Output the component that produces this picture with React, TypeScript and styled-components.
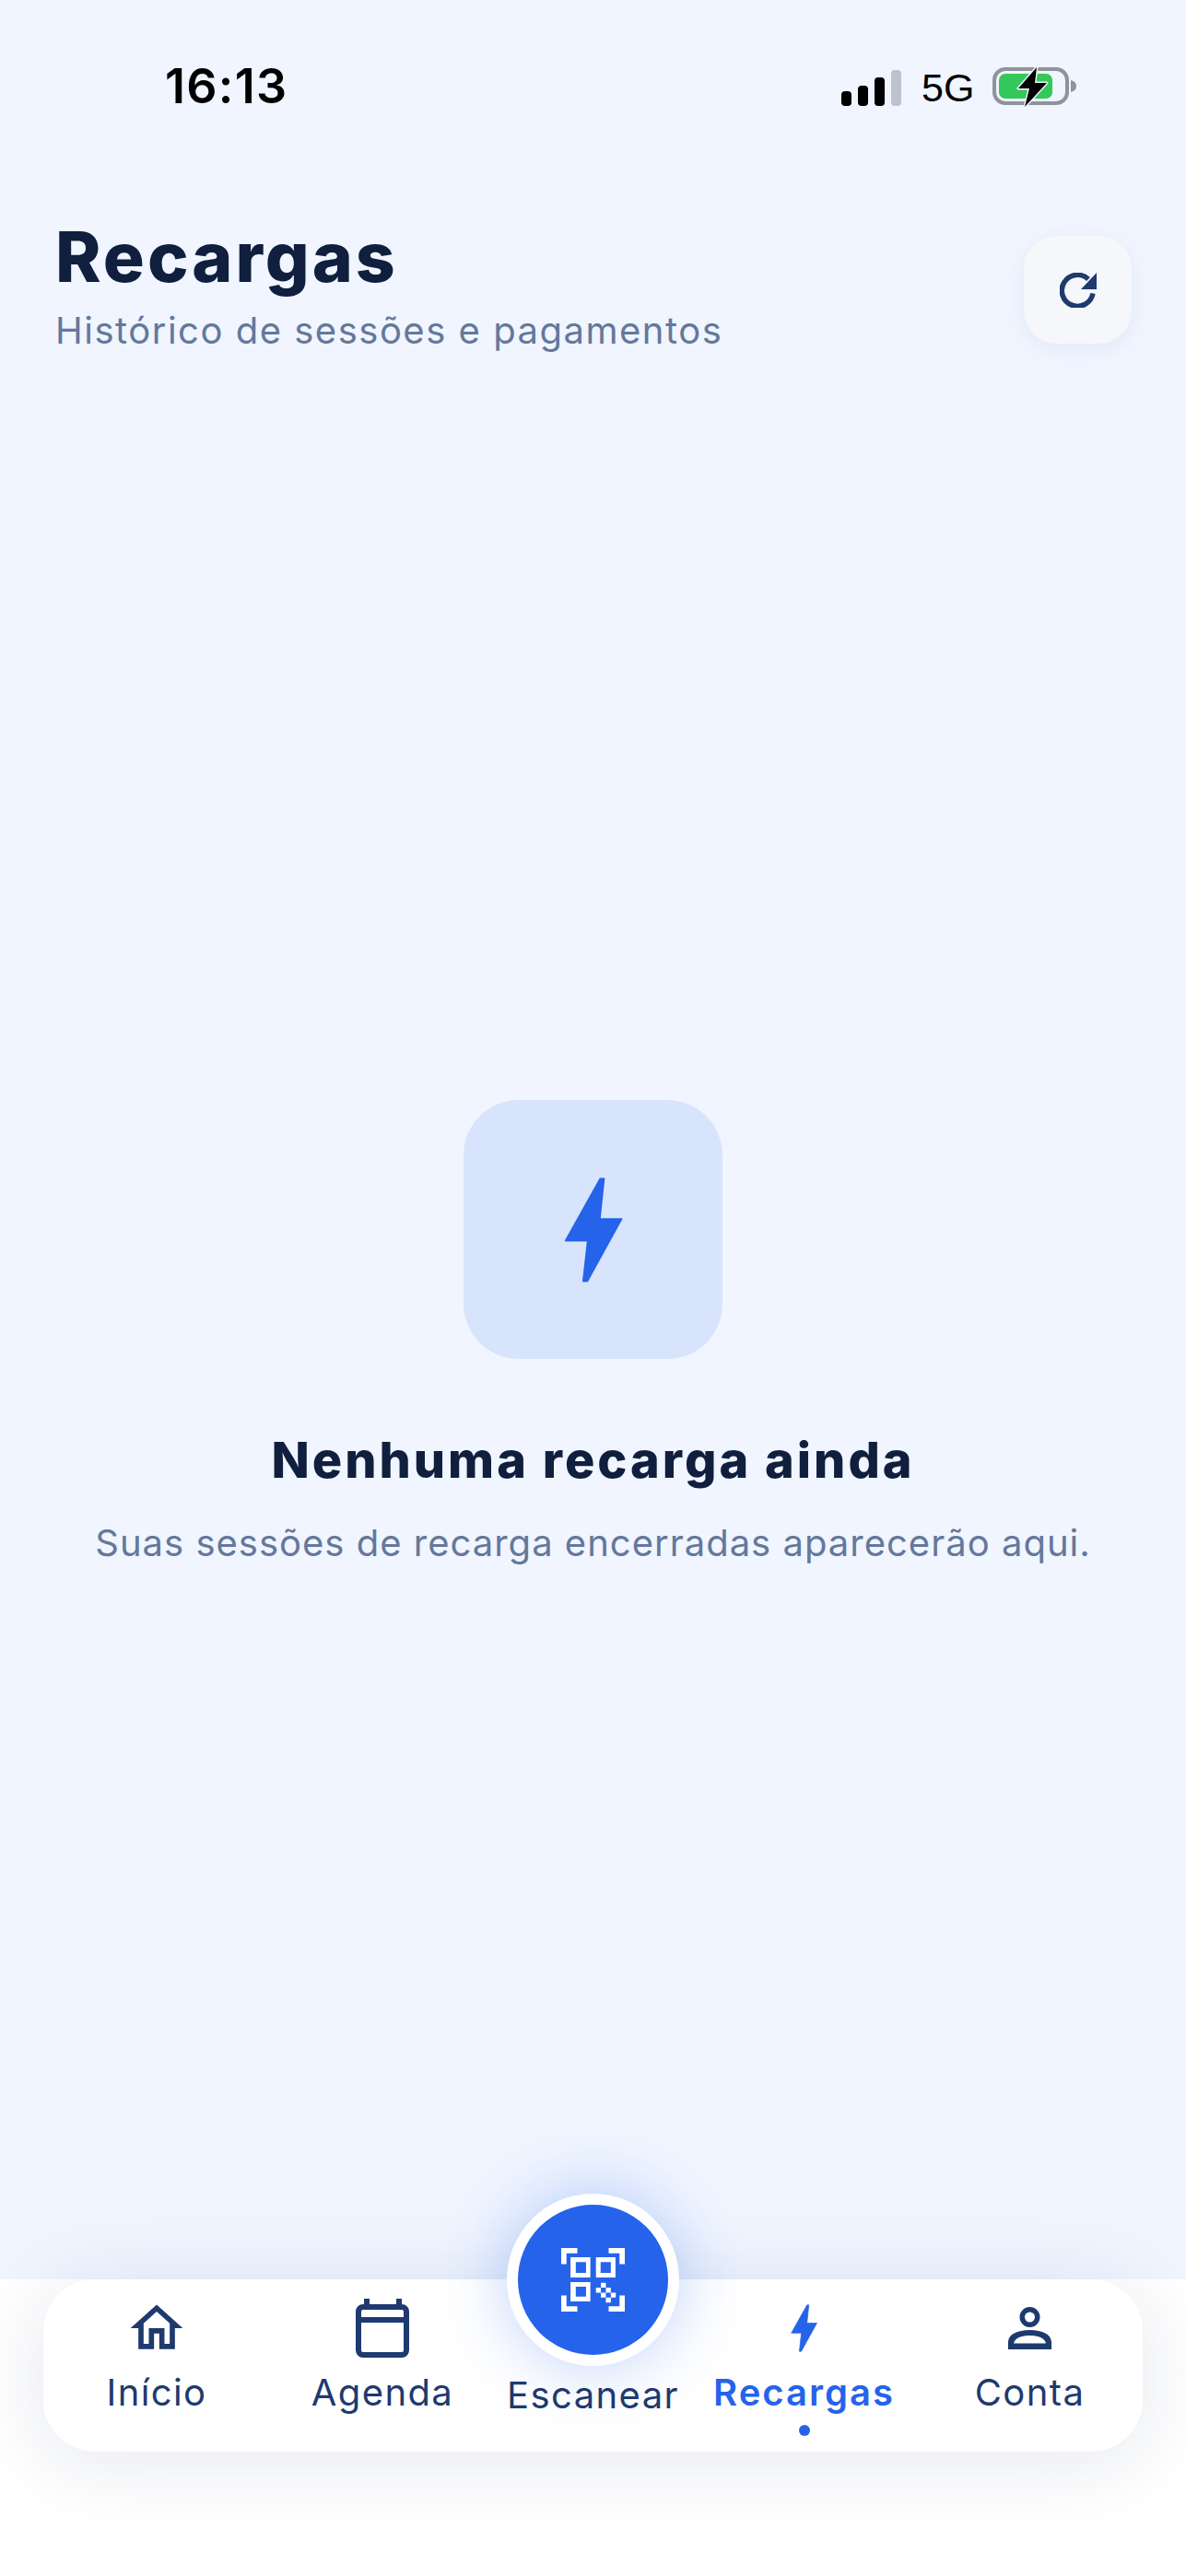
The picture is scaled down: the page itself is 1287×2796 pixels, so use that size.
import React from "react";
import styled, { createGlobalStyle } from "styled-components";

const GlobalStyle = createGlobalStyle`
  html, body {
    margin: 0;
    padding: 0;
    background: #f0f5ff;
  }
  * {
    box-sizing: border-box;
  }
`;

const Screen = styled.div`
  width: 1287px;
  height: 2796px;
  display: flex;
  flex-direction: column;
  overflow: hidden;
  background: #f0f5ff;
  font-family: Inter, "Liberation Sans", sans-serif;
`;

const StatusBar = styled.div`
  height: 130px;
  padding: 63px 0 0 179px;
  display: flex;
  justify-content: space-between;
  align-items: flex-start;
`;

const Clock = styled.div`
  font-size: 52px;
  line-height: 62px;
  font-weight: 600;
  color: #000;
  letter-spacing: 1.3px;
`;

const StatusIcons = styled.div`
  display: flex;
  align-items: center;
  gap: 22px;
  margin-top: 10px;
  padding-right: 118px;
`;

const Signal = styled.div`
  display: flex;
  align-items: flex-end;
  gap: 7px;
  height: 40px;
`;

const SignalBar = styled.span<{ $h: number; $off?: boolean }>`
  width: 11px;
  height: ${(p) => p.$h}px;
  border-radius: 4px;
  background: ${(p) => (p.$off ? "#bcc2ce" : "#000")};
`;

const NetworkLabel = styled.span`
  font-family: "Liberation Sans", Arial, sans-serif;
  font-size: 43px;
  line-height: 44px;
  color: #000;
  width: 55px;
  white-space: nowrap;
`;

const Header = styled.header`
  display: flex;
  justify-content: space-between;
  align-items: flex-start;
  padding: 0 59px 0 60px;
  margin-top: 126px;
`;

const TitleBlock = styled.div`
  display: flex;
  flex-direction: column;
`;

const PageTitle = styled.h1`
  margin: -21px 0 0;
  font-size: 75px;
  line-height: 88px;
  font-weight: 800;
  color: #0f1f3d;
  letter-spacing: 3px;
`;

const PageSubtitle = styled.p`
  margin: 12px 0 0;
  font-size: 40px;
  line-height: 48px;
  color: #64789b;
  letter-spacing: 1.5px;
`;

const RefreshButton = styled.button`
  width: 117px;
  height: 117px;
  border: none;
  border-radius: 36px;
  background: #f5f7fb;
  box-shadow: 0 6px 24px rgba(30, 58, 110, 0.06);
  display: flex;
  align-items: center;
  justify-content: center;
  padding: 0;
`;

const Main = styled.main`
  flex: 1;
  display: flex;
  flex-direction: column;
  align-items: center;
  padding-top: 811px;
`;

const EmptyBadge = styled.div`
  width: 281px;
  height: 281px;
  border-radius: 60px;
  background: #d8e4fc;
  display: flex;
  align-items: center;
  justify-content: center;
`;

const EmptyTitle = styled.h2`
  margin: 77px 0 0;
  font-size: 54px;
  line-height: 66px;
  font-weight: 800;
  color: #0f1f3d;
  letter-spacing: 3px;
`;

const EmptyText = styled.p`
  margin: 33px 0 0;
  font-size: 40px;
  line-height: 48px;
  color: #64789b;
  letter-spacing: 1px;
`;

const TabArea = styled.div`
  height: 322px;
  background: #fff;
  padding: 0 47px;
  position: relative;
`;

const TabBar = styled.nav`
  height: 187px;
  border-radius: 56px;
  background: #fff;
  box-shadow: 0 10px 90px rgba(20, 40, 90, 0.11);
  display: grid;
  grid-template-columns: 246px 244px 213px 245px 245px;
`;

const TabItem = styled.div`
  display: flex;
  flex-direction: column;
  align-items: center;
  position: relative;
`;

const IconSlot = styled.div`
  height: 64px;
  margin-top: 21px;
  display: flex;
  align-items: center;
  justify-content: center;
`;

const TabLabel = styled.span<{ $active?: boolean }>`
  margin-top: 14px;
  font-size: 40px;
  line-height: 48px;
  font-weight: ${(p) => (p.$active ? 600 : 400)};
  color: ${(p) => (p.$active ? "#2563eb" : "#1e3a6e")};
  letter-spacing: ${(p) => (p.$active ? "2px" : "1.4px")};
  white-space: nowrap;
`;

const ActiveDot = styled.span`
  width: 12px;
  height: 12px;
  margin-top: 11px;
  border-radius: 50%;
  background: #2563eb;
`;

const ScanButton = styled.div`
  width: 187px;
  height: 187px;
  margin-top: -93px;
  border-radius: 50%;
  border: 12px solid #fff;
  background: #2563eb;
  box-shadow: 0 0 70px rgba(37, 99, 235, 0.3);
  display: flex;
  align-items: center;
  justify-content: center;
  flex-shrink: 0;
`;

const ScanLabel = styled(TabLabel)`
  margin-top: 8px;
`;

const Bolt = ({ w, h }: { w: number; h: number }) => (
  <svg width={w} height={h} viewBox="393 323 194 347">
    <path
      fill="#2563eb"
      stroke="#2563eb"
      strokeWidth="5"
      strokeLinejoin="round"
      d="M512 328H525L511 460H583L470 665H456L471 532H398Z"
    />
  </svg>
);

const HomeIcon = () => (
  <svg width="68" height="68" viewBox="0 0 24 24" fill="#1e3a6e">
    <path d="M12 5.69l5 4.5V18h-2v-6H9v6H7v-7.81l5-4.5M12 3L2 12h3v8h6v-6h2v6h6v-8h3L12 3z" />
  </svg>
);

const CalendarIcon = () => (
  <svg width="58" height="64" viewBox="0 0 58 64" fill="none">
    <rect x="3" y="9" width="52" height="52" rx="5" stroke="#1e3a6e" strokeWidth="6" />
    <path d="M3 23H55" stroke="#1e3a6e" strokeWidth="6" />
    <path d="M12 0V8M47 0V8" stroke="#1e3a6e" strokeWidth="6" />
  </svg>
);

const PersonIcon = () => (
  <svg width="47" height="47" viewBox="0 0 47 47" fill="#1e3a6e">
    <path
      fillRule="evenodd"
      d="M23.5 0A11 11 0 1 1 23.5 22A11 11 0 1 1 23.5 0ZM23.5 5.500A5.500 5.500 0 1 0 23.5 16.500A5.500 5.500 0 1 0 23.5 5.500Z"
    />
    <path
      fillRule="evenodd"
      d="M0 46V38C0 30 10 25 23.500 25S47 30 47 38V46ZM6 39.500H41C40 34 33 31 23.500 31S7 34 6 39.500Z"
    />
  </svg>
);

const RefreshIcon = () => (
  <svg width="40" height="38" viewBox="0 0 40 38" fill="none">
    <path d="M31 7A17 17 0 1 0 36 22.500" stroke="#1e3a6e" strokeWidth="5.500" />
    <path d="M40 0V18H23Z" fill="#1e3a6e" />
  </svg>
);

const ScanIcon = () => (
  <svg width="69" height="69" viewBox="0 0 205 205" fill="#fff">
    <path d="M0 52V0H52V17H17V52Z" />
    <path d="M205 52V0H153V17H188V52Z" />
    <path d="M0 153V205H52V188H17V153Z" />
    <path d="M205 153V205H153V188H188V153Z" />
    <path fillRule="evenodd" d="M30 30H94V95H30ZM47 45V80H80V45Z" />
    <path fillRule="evenodd" d="M112 30H175V95H112ZM127 45V80H160V45Z" />
    <path fillRule="evenodd" d="M30 110H94V172H30ZM47 125V157H80V125Z" />
    <path d="M128 112h16v16h-16zM112 128h16v16h-16zM144 128h16v16h-16zM128 144h16v16h-16zM160 144h16v16h-16zM144 160h16v16h-16z" />
  </svg>
);

const Battery = () => (
  <svg width="92" height="44" viewBox="0 0 92 44" fill="none">
    <rect x="2" y="2" width="79" height="37" rx="12" stroke="#8f939b" strokeWidth="4" />
    <rect x="7" y="7" width="58" height="27" rx="7" fill="#34c759" />
    <path d="M85 14C89 15 91 17 91 20.500S89 26 85 27Z" fill="#8f939b" />
    <path
      d="M48 0L28 23H40L35 43L59 17H46Z"
      fill="#000"
      stroke="#f0f5ff"
      strokeWidth="3"
      strokeLinejoin="round"
      paintOrder="stroke"
    />
  </svg>
);

function App() {
  return (
    <>
      <GlobalStyle />
      <Screen>
        <StatusBar>
          <Clock>16:13</Clock>
          <StatusIcons>
            <Signal>
              <SignalBar $h={16} />
              <SignalBar $h={22} />
              <SignalBar $h={31} />
              <SignalBar $h={39} $off />
            </Signal>
            <NetworkLabel>5G</NetworkLabel>
            <Battery />
          </StatusIcons>
        </StatusBar>
        <Header>
          <TitleBlock>
            <PageTitle>Recargas</PageTitle>
            <PageSubtitle>Histórico de sessões e pagamentos</PageSubtitle>
          </TitleBlock>
          <RefreshButton aria-label="Atualizar">
            <RefreshIcon />
          </RefreshButton>
        </Header>
        <Main>
          <EmptyBadge>
            <Bolt w={64} h={116} />
          </EmptyBadge>
          <EmptyTitle>Nenhuma recarga ainda</EmptyTitle>
          <EmptyText>Suas sessões de recarga encerradas aparecerão aqui.</EmptyText>
        </Main>
        <TabArea>
          <TabBar>
            <TabItem>
              <IconSlot>
                <HomeIcon />
              </IconSlot>
              <TabLabel>Início</TabLabel>
            </TabItem>
            <TabItem>
              <IconSlot>
                <CalendarIcon />
              </IconSlot>
              <TabLabel>Agenda</TabLabel>
            </TabItem>
            <TabItem>
              <ScanButton>
                <ScanIcon />
              </ScanButton>
              <ScanLabel>Escanear</ScanLabel>
            </TabItem>
            <TabItem>
              <IconSlot>
                <Bolt w={29} h={52} />
              </IconSlot>
              <TabLabel $active>Recargas</TabLabel>
              <ActiveDot />
            </TabItem>
            <TabItem>
              <IconSlot>
                <PersonIcon />
              </IconSlot>
              <TabLabel>Conta</TabLabel>
            </TabItem>
          </TabBar>
        </TabArea>
      </Screen>
    </>
  );
}

export default App;
